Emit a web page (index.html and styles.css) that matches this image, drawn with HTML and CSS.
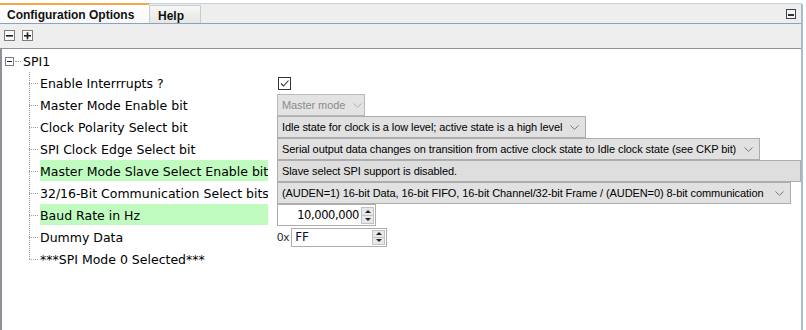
FILE: index.html
```html
<!DOCTYPE html>
<html lang="en">
<head>
  <meta charset="UTF-8">
  <title>Configuration Options</title>
  <link rel="stylesheet" href="styles.css">
</head>
<body>
  <div class="window">
    <div class="tabbar">
      <div class="tab active">Configuration Options</div>
      <div class="tab">Help</div>
      <div class="tab-fill"></div>
      <span class="min-btn"><span></span></span>
    </div>

    <div class="toolbar">
      <span class="tool-btn"><svg width="9" height="9" viewBox="0 0 9 9"><rect x="1" y="4" width="7" height="1.6" fill="#222"/></svg></span>
      <span class="tool-btn"><svg width="9" height="9" viewBox="0 0 9 9"><rect x="1" y="4" width="7" height="1.6" fill="#222"/><rect x="3.7" y="1.3" width="1.6" height="7" fill="#222"/></svg></span>
    </div>

    <div class="tree">
      <div class="root">
        <span class="expander"><svg width="9" height="9" viewBox="0 0 9 9"><rect x="0.5" y="0.5" width="8" height="8" fill="#fff" stroke="#7b7b7b"/><rect x="2" y="4" width="5" height="1" fill="#222"/></svg></span>
        <span class="stub"></span>
        <span class="node-text">SPI1</span>
      </div>

      <div class="row">
        <span class="twig"></span>
        <span class="label">Enable Interrrupts ?</span>
        <div class="ctl">
          <span class="checkbox"><svg width="11" height="11" viewBox="0 0 11 11"><polyline points="2,5.5 4.5,8 9.5,2.5" fill="none" stroke="#333" stroke-width="1.1"/></svg></span>
        </div>
      </div>

      <div class="row">
        <span class="twig"></span>
        <span class="label">Master Mode Enable bit</span>
        <div class="ctl">
          <span class="combo disabled">Master mode <svg class="chev" width="9" height="5" viewBox="0 0 9 5"><polyline points="0.5,0.5 4.5,4.3 8.5,0.5" fill="none" stroke="#b0b0b0"/></svg></span>
        </div>
      </div>

      <div class="row">
        <span class="twig"></span>
        <span class="label">Clock Polarity Select bit</span>
        <div class="ctl">
          <span class="combo">Idle state for clock is a low level; active state is a high level <svg class="chev" width="9" height="5" viewBox="0 0 9 5"><polyline points="0.5,0.5 4.5,4.3 8.5,0.5" fill="none" stroke="#777"/></svg></span>
        </div>
      </div>

      <div class="row">
        <span class="twig"></span>
        <span class="label">SPI Clock Edge Select bit</span>
        <div class="ctl">
          <span class="combo">Serial output data changes on transition from active clock state to Idle clock state (see CKP bit) <svg class="chev" width="9" height="5" viewBox="0 0 9 5"><polyline points="0.5,0.5 4.5,4.3 8.5,0.5" fill="none" stroke="#777"/></svg></span>
        </div>
      </div>

      <div class="row">
        <span class="twig"></span>
        <span class="label changed">Master Mode Slave Select Enable bit</span>
        <div class="ctl">
          <span class="combo info">Slave select SPI support is disabled.</span>
        </div>
      </div>

      <div class="row">
        <span class="twig"></span>
        <span class="label">32/16-Bit Communication Select bits</span>
        <div class="ctl">
          <span class="combo wide">(AUDEN=1) 16-bit Data, 16-bit FIFO, 16-bit Channel/32-bit Frame / (AUDEN=0) 8-bit communication <svg class="chev" width="9" height="5" viewBox="0 0 9 5"><polyline points="0.5,0.5 4.5,4.3 8.5,0.5" fill="none" stroke="#777"/></svg></span>
        </div>
      </div>

      <div class="row">
        <span class="twig"></span>
        <span class="label changed">Baud Rate in Hz</span>
        <div class="ctl">
          <span class="spinner baud"><span class="value">10,000,000</span><span class="spin"><span class="up"></span><span class="down"></span></span></span>
        </div>
      </div>

      <div class="row">
        <span class="twig"></span>
        <span class="label">Dummy Data</span>
        <div class="ctl">
          <span class="prefix">0x</span>
          <span class="spinner hex"><span class="value">FF</span><span class="spin"><span class="up"></span><span class="down"></span></span></span>
        </div>
      </div>

      <div class="row">
        <span class="twig last"></span>
        <span class="label">***SPI Mode 0 Selected***</span>
        <div class="ctl"></div>
      </div>
    </div>
  </div>
</body>
</html>
```

FILE: styles.css
```css
:root {
  --panel-bg: #eeeeee;
  --frame: #8aa3be;
  --tree-border: #8b9099;
  --ctl-border: #adadad;
  --ctl-bg: #e1e1e1;
  --changed: #c0fcc0;
}

body {
  margin: 0;
  background: #ffffff;
  font-family: "DejaVu Sans", Verdana, sans-serif;
  color: #000;
}

.window {
  width: 801px;
  margin-top: 3px;
  border-right: 2px solid #a9bbcf;
  border-top-right-radius: 3px;
  height: 327px;
  display: flex;
  flex-direction: column;
}

/* tabs */

.tabbar {
  display: flex;
  align-items: stretch;
  height: 19px;
  background: var(--panel-bg);
  border-top: 1px solid #c3cfdb;
  border-bottom: 1px solid var(--frame);
}

.tab {
  font-family: "Liberation Sans", Arial, sans-serif;
  font-weight: bold;
  font-size: 12px;
  color: #111;
  padding: 3px 8px 0;
  box-sizing: border-box;
}

.tab.active {
  width: 149px;
  margin-top: -1px;
  padding-left: 7px;
  background: linear-gradient(#ffffff, #f8f8f8);
  border-top: 2px solid #f5a640;
}

.tab:not(.active) {
  width: 52px;
  margin-top: 1px;
  padding-left: 8px;
  background: linear-gradient(#f7f7f5, #e6e6e2);
  border: 1px solid #c4ccd6;
  border-bottom: none;
}

.tab-fill {
  flex: 1;
}

.min-btn {
  align-self: center;
  width: 8px;
  height: 8px;
  margin-right: 5px;
  border: 1px solid #3d424c;
  background: #f4f4f4;
  display: flex;
  align-items: flex-end;
  justify-content: center;
}

.min-btn span {
  width: 6px;
  height: 2px;
  margin-bottom: 2px;
  background: #2e333c;
}

/* toolbar */

.toolbar {
  height: 25px;
  background: var(--panel-bg);
  border-bottom: 1px solid var(--tree-border);
  display: flex;
  align-items: center;
  gap: 7px;
  padding-left: 4px;
  padding-bottom: 1px;
  box-sizing: border-box;
}

.tool-btn {
  width: 9px;
  height: 9px;
  border: 1px solid #7d7d7d;
  background: #fafafa;
  display: flex;
}

/* tree */

.tree {
  flex: 1;
  background: #fff;
  border-left: 2px solid var(--tree-border);
  padding-top: 1px;
}

.root {
  height: 22px;
  display: flex;
  align-items: center;
  padding-left: 3px;
}

.expander {
  display: flex;
}

.stub {
  width: 6px;
  margin: 0 2px 0 1px;
  border-top: 1px dotted #9a9a9a;
}

.node-text,
.label {
  font-size: 12.5px;
  white-space: nowrap;
}

.row {
  display: grid;
  grid-template-columns: 38px 228px 1fr;
  height: 22px;
}

.twig {
  margin-left: 27px;
  background:
    repeating-linear-gradient(to bottom, #9a9a9a 0 1px, transparent 1px 2px) 0 0 / 1px 100% no-repeat,
    repeating-linear-gradient(to right, #9a9a9a 0 1px, transparent 1px 2px) 0 11px / 10px 1px no-repeat;
}

.twig.last {
  background-size: 1px 12px, 10px 1px;
}

.label {
  display: flex;
  align-items: center;
  height: 21px;
  padding-top: 1px;
  box-sizing: border-box;
  overflow: hidden;
}

.label.changed {
  background: var(--changed);
}

.ctl {
  display: flex;
  align-items: center;
  margin-left: 9px;
}

/* controls */

.checkbox {
  width: 11px;
  height: 11px;
  border: 1px solid #333;
  background: #fff;
  margin-left: 1px;
  display: flex;
}

.combo {
  font-family: "Liberation Sans", Arial, sans-serif;
  font-size: 11px;
  letter-spacing: -0.08px;
  height: 22px;
  box-sizing: border-box;
  border: 1px solid var(--ctl-border);
  background: var(--ctl-bg);
  display: inline-flex;
  align-items: center;
  gap: 8px;
  padding: 0 6px 0 4px;
  white-space: nowrap;
}

.combo.disabled {
  width: 88px;
  justify-content: space-between;
  color: #8b8b8b;
  background: #e3e3e3;
  border-color: #b9b9b9;
}

.combo.info {
  flex: 1;
  background: #dedede;
}

.combo.wide .chev {
  margin-left: 4px;
}

.chev {
  flex: none;
}

.spinner {
  height: 22px;
  box-sizing: border-box;
  border: 1px solid var(--ctl-border);
  background: #fff;
  display: inline-flex;
  align-items: center;
  font-size: 12px;
}

.spinner.baud {
  width: 99px;
}

.spinner.baud .value {
  flex: 1;
  text-align: right;
  padding-right: 2px;
  font-size: 11.5px;
  letter-spacing: -0.4px;
}

.spinner.hex {
  width: 96px;
  height: 19px;
  margin-left: 2px;
}

.spinner.hex .value {
  flex: 1;
  padding-left: 3px;
  color: #0a0a40;
}

.prefix {
  font-family: "Liberation Sans", Arial, sans-serif;
  font-size: 11.5px;
  color: #222;
}

.spin {
  width: 13px;
  height: 17px;
  margin-right: 1px;
  display: flex;
  flex-direction: column;
  border: 1px solid #c3c3c3;
  box-sizing: border-box;
}

.spinner.hex .spin {
  height: 15px;
}

.spin span {
  flex: 1;
  background: #e8e8e8;
  display: flex;
  align-items: center;
  justify-content: center;
}

.spin .up {
  border-bottom: 1px solid #c3c3c3;
}

.spin .up::after {
  content: "";
  border: 3px solid transparent;
  border-bottom: 3px solid #222;
  border-top: none;
}

.spin .down::after {
  content: "";
  border: 3px solid transparent;
  border-top: 3px solid #222;
  border-bottom: none;
}
```
